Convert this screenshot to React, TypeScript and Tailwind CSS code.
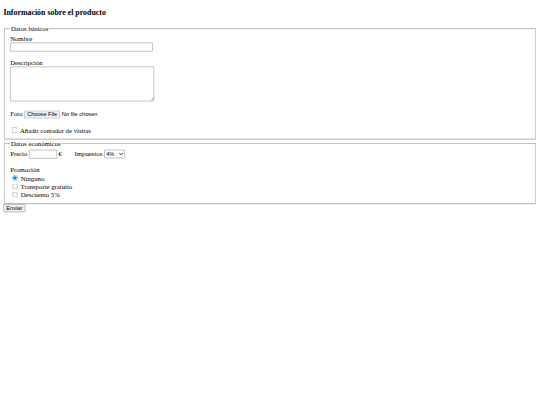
import React from 'react'

const control = "font-['Liberation_Sans',Arial,sans-serif] text-[13.333px] leading-[normal]"

export default function App() {
  return (
    <div className="h-[405px] w-[540px] overflow-hidden bg-white">
      <div className="w-[1280px] origin-top-left scale-[0.421875] font-['Liberation_Serif','Times_New_Roman',serif] text-[16px] leading-[normal] text-black">
        <form className="px-2 pb-2">
          <h3 className="mb-[18.72px] pt-[18.72px] text-[18.72px] font-bold">
            Información sobre el producto
          </h3>

          <fieldset className="mx-[2px] border-2 border-[#c0c0c0] px-[12px] pb-[10px] pt-[5.6px] [border-style:groove]">
            <legend className="px-[2px]">Datos básicos</legend>
            Nombre
            <br />
            <input
              type="text"
              className={`${control} h-[21px] w-[338px] rounded-[2px] border border-[#767676] bg-white px-[2px] py-[1px]`}
            />
            <br />
            <br />
            Descripción
            <br />
            <textarea
              rows={4}
              className={`${control} h-[82px] w-[341px] resize rounded-[2px] border border-[#767676] bg-white px-[2px] py-[2px] align-baseline`}
            />
            <br />
            <br />
            Foto{' '}
            <input
              type="file"
              className={`${control} file:mr-[4px] file:rounded-[2px] file:border file:border-solid file:border-[#767676] file:bg-[#efefef] file:px-[6px] file:py-[1px] file:text-black`}
            />
            <br />
            <br />
            <input type="checkbox" className="mb-[3px] ml-[4px] mr-[3px] mt-[3px]" />{' '}
            Añadir contador de visitas
          </fieldset>

          <fieldset className="mx-[2px] border-2 border-[#c0c0c0] px-[12px] pb-[10px] pt-[5.6px] [border-style:groove]">
            <legend className="px-[2px]">Datos económicos</legend>
            Precio{' '}
            <input
              type="text"
              className={`${control} h-[21px] w-[66px] rounded-[2px] border border-[#767676] bg-white px-[2px] py-[1px]`}
            />{' '}
            €
            <span className="inline-block w-[30px]" />
            Impuestos{' '}
            <select
              defaultValue="4"
              className={`${control} h-[20px] rounded-[2px] border border-[#767676] bg-white`}
            >
              <option value="4">4%</option>
              <option value="10">10%</option>
              <option value="21">21%</option>
            </select>
            <br />
            <br />
            Promoción
            <br />
            <label>
              <input type="radio" name="promo" defaultChecked className="ml-[5px] mr-[3px] mt-[3px]" />{' '}
              Ninguno
            </label>
            <br />
            <label>
              <input type="radio" name="promo" className="ml-[5px] mr-[3px] mt-[3px]" />{' '}
              Transporte gratuito
            </label>
            <br />
            <label>
              <input type="radio" name="promo" className="ml-[5px] mr-[3px] mt-[3px]" />{' '}
              Descuento 5%
            </label>
          </fieldset>

          <button
            type="submit"
            className={`${control} rounded-[2px] border border-[#767676] bg-[#efefef] px-[6px] py-[1px]`}
          >
            Enviar
          </button>
        </form>
      </div>
    </div>
  )
}
